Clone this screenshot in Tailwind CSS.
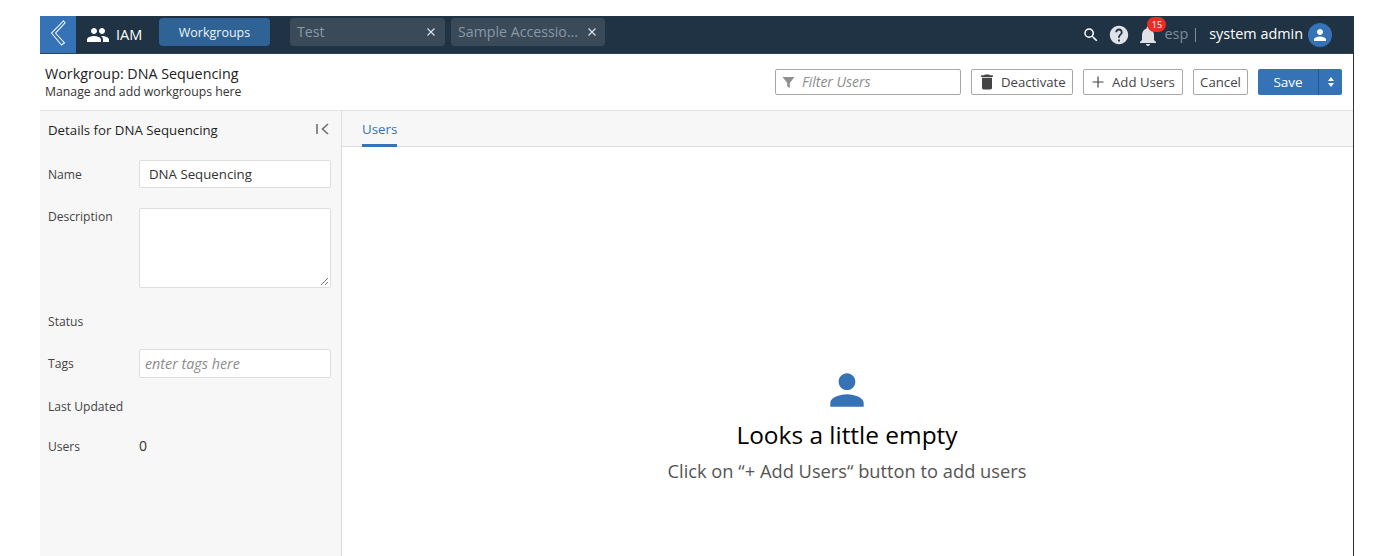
<!DOCTYPE html>
<html>
<head>
<meta charset="utf-8">
<script src="https://cdn.jsdelivr.net/npm/@tailwindcss/browser@4"></script>
</head>
<body class="bg-white overflow-hidden font-['Open_Sans',sans-serif]">
<div class="w-[1384px] h-[556px] pl-[40px] pt-[16px] overflow-hidden">
  <div class="w-[1314px] h-[540px] flex flex-col border-r border-r-[#333333]">
    <header class="h-[38px] shrink-0 bg-[#203345] border-b border-[#2c4257] flex items-center text-white">
      <div class="w-[36px] h-[37px] bg-[#3572b6] flex items-start justify-center pt-[4px] shrink-0">
        <svg width="16" height="26" viewBox="0 0 16 26" fill="none" stroke="#e8f0f8" stroke-width="1.1"><path d="M13.5 0.8 L1.5 13 L11.5 25 L14.5 22.8 L5.5 13 L15 3 Z"/></svg>
      </div>
      <svg class="ml-[10px] shrink-0" width="24" height="24" viewBox="0 0 24 24" fill="#ffffff"><path d="M16 11c1.66 0 2.99-1.34 2.99-3S17.66 5 16 5s-3 1.34-3 3 1.34 3 3 3zm-8 0c1.66 0 2.99-1.34 2.99-3S9.66 5 8 5 5 6.34 5 8s1.34 3 3 3zm0 2c-2.33 0-7 1.17-7 3.5V19h14v-2.5c0-2.33-4.67-3.5-7-3.5zm8 0c-.29 0-.62.02-.97.05 1.16.84 1.97 1.97 1.97 3.45V19h6v-2.5c0-2.33-4.67-3.5-7-3.5z"/></svg>
      <span class="ml-[6px] text-[14.5px] font-medium w-[27px]">IAM</span>
      <div class="self-start mt-[2px] ml-[16px] w-[111px] h-[28px] pt-[2px] rounded-[4px] bg-[#2f6295] flex items-center justify-center text-[12.5px] font-medium text-[#f0f4f8]">Workgroups</div>
      <div class="self-start mt-[2px] ml-[20px] w-[155px] h-[28px] rounded-[4px] bg-[#3a4a59] flex items-center justify-between pl-[7px] pr-[9px] text-[14.2px] text-[#8b98a5]">
        <span>Test</span>
        <svg width="10" height="10" viewBox="0 0 10 10" stroke="#dfe4e9" stroke-width="1.1"><path d="M1.5 1.5l7 7M8.5 1.5l-7 7"/></svg>
      </div>
      <div class="self-start mt-[2px] ml-[6px] w-[154px] h-[28px] rounded-[4px] bg-[#3a4a59] flex items-center justify-between pl-[7px] pr-[8px] text-[14.2px] text-[#8b98a5]">
        <span class="whitespace-nowrap">Sample Accessio...</span>
        <svg width="10" height="10" viewBox="0 0 10 10" stroke="#dfe4e9" stroke-width="1.1"><path d="M1.5 1.5l7 7M8.5 1.5l-7 7"/></svg>
      </div>
      <div class="ml-auto flex items-center pr-[21px]">
        <svg width="18" height="18" viewBox="0 0 24 24" fill="#ffffff"><path d="M15.5 14h-.79l-.28-.27A6.47 6.47 0 0 0 16 9.5 6.5 6.5 0 1 0 9.5 16c1.61 0 3.09-.59 4.23-1.57l.27.28v.79l5 4.99L20.49 19l-4.99-5zm-6 0C7.01 14 5 11.99 5 9.5S7.01 5 9.5 5 14 7.01 14 9.5 11.99 14 9.5 14z"/></svg>
        <svg class="ml-[8px]" width="22" height="22" viewBox="0 0 24 24" fill="#dfe3e7"><path d="M12 2C6.48 2 2 6.48 2 12s4.48 10 10 10 10-4.48 10-10S17.52 2 12 2zm1 17h-2v-2h2v2zm2.07-7.75l-.9.92C13.45 12.9 13 13.5 13 15h-2v-.5c0-1.1.45-2.1 1.17-2.83l1.24-1.26c.37-.36.59-.86.59-1.41 0-1.1-.9-2-2-2s-2 .9-2 2H8c0-2.21 1.79-4 4-4s4 1.79 4 4c0 .88-.36 1.68-.93 2.25z"/></svg>
        <div class="relative ml-[8px] w-[20px] h-[24px] mt-[2px]">
          <svg class="absolute left-[-2px] top-0" width="24" height="24" viewBox="0 0 24 24" fill="#dfe3e7"><path d="M12 22c1.1 0 2-.9 2-2h-4c0 1.1.9 2 2 2zm6-6v-5c0-3.07-1.63-5.64-4.5-6.32V4c0-.83-.67-1.5-1.5-1.5s-1.5.67-1.5 1.5v.68C7.64 5.36 6 7.92 6 11v5l-2 2v1h16v-1l-2-2z"/></svg>
          <span class="absolute left-[9px] top-[-7px] w-[19px] h-[15px] rounded-full bg-[#e62e25] text-white text-[9px] leading-[15px] text-center">15</span>
        </div>
        <span class="ml-[6px] pb-[1px] text-[14.4px] text-[#7f8c99]">esp</span>
        <span class="ml-[7px] w-px h-[14px] bg-[#7f8c99]"></span>
        <span class="ml-[13px] pb-[1px] text-[14.4px] text-white whitespace-nowrap">system admin</span>
        <span class="ml-[5px] w-[24px] h-[24px] rounded-full bg-[#3572b6] flex items-center justify-center">
          <svg width="18" height="18" viewBox="0 0 24 24" fill="#ffffff"><path d="M12 12c2.21 0 4-1.79 4-4s-1.79-4-4-4-4 1.79-4 4 1.79 4 4 4zm0 2c-2.67 0-8 1.34-8 4v2h16v-2c0-2.66-5.33-4-8-4z"/></svg>
        </span>
      </div>
    </header>

    <div class="h-[57px] shrink-0 bg-white border-b border-[#e2e2e2] flex items-center pl-[5px] pr-[11px]">
      <div>
        <div class="text-[14.3px] leading-[19px] text-[#222222]">Workgroup: DNA Sequencing</div>
        <div class="text-[12.25px] leading-[17px] text-[#333333]">Manage and add workgroups here</div>
      </div>
      <div class="ml-auto flex items-center text-[13.2px] text-[#444444]">
        <div class="w-[186px] h-[26px] border border-[#a8a8a8] rounded-[2px] flex items-center pl-[6px]">
          <svg width="13" height="13" viewBox="0 0 12 12" fill="#8f8f8f"><path d="M0.5 1h11L7.2 6.4V11L4.8 9.8V6.4z"/></svg>
          <span class="ml-[7px] pb-[2px] text-[14px] italic text-[#8c8c8c]">Filter Users</span>
        </div>
        <div class="ml-[10px] w-[102px] h-[26px] border border-[#a8a8a8] rounded-[2px] flex items-center pl-[5px]">
          <svg width="20" height="20" viewBox="0 0 24 24" fill="#444444"><path d="M6 19c0 1.1.9 2 2 2h8c1.1 0 2-.9 2-2V7H6v12zM19 4h-3.5l-1-1h-5l-1 1H5v2h14V4z"/></svg>
          <span class="ml-[4px] pt-[1px] whitespace-nowrap">Deactivate</span>
        </div>
        <div class="ml-[10px] w-[100px] h-[26px] border border-[#a8a8a8] rounded-[2px] flex items-center pl-[7px]">
          <svg width="14" height="14" viewBox="0 0 14 14" stroke="#444444" stroke-width="1.2"><path d="M7 1.5v11M1.5 7h11"/></svg>
          <span class="ml-[7px] pt-[1px] whitespace-nowrap">Add Users</span>
        </div>
        <div class="ml-[10px] w-[55px] h-[26px] pt-[1px] border border-[#a8a8a8] rounded-[2px] flex items-center justify-center">Cancel</div>
        <div class="ml-[10px] w-[84px] h-[26px] rounded-[2px] bg-[#3572b6] flex items-center text-white">
          <span class="w-[60px] text-center font-medium text-[13.5px]">Save</span>
          <span class="w-px h-full bg-[#27588f]"></span>
          <span class="flex-1 flex justify-center">
            <svg width="8" height="12" viewBox="0 0 8 12" fill="#ffffff"><path d="M4 1l3 4H1zM4 11L1 7h6z"/></svg>
          </span>
        </div>
      </div>
    </div>

    <div class="flex-1 flex min-h-0">
      <aside class="w-[302px] shrink-0 bg-[#f7f7f7] border-r border-[#dcdcdc] pl-[8px] pr-[10px] text-[12.1px] text-[#444444]">
        <div class="h-[39px] flex items-center justify-between pr-[2px]">
          <span class="text-[13.25px] text-[#1f1f1f]">Details for DNA Sequencing</span>
          <svg class="mb-[3px]" width="13" height="12" viewBox="0 0 13 12" fill="none" stroke="#6f6f6f" stroke-width="1.6"><path d="M1 1v10M12 1L6.5 6l5.5 5"/></svg>
        </div>
        <div class="mt-[10px] flex items-center h-[28px]">
          <span class="w-[91px] pt-[2px]">Name</span>
          <div class="w-[192px] h-[28px] bg-white border border-[#dedede] rounded-[2px] pl-[9px] text-[13.25px] leading-[26px] text-[#333333]">DNA Sequencing</div>
        </div>
        <div class="mt-[20px] flex items-start h-[80px]">
          <span class="w-[91px]">Description</span>
          <div class="relative w-[192px] h-[80px] bg-white border border-[#dedede] rounded-[2px]">
            <svg class="absolute right-[1px] bottom-[1px]" width="9" height="9" viewBox="0 0 9 9" stroke="#777777" stroke-width="1"><path d="M1 8l7-7M5 8l3-3"/></svg>
          </div>
        </div>
        <div class="mt-[25px] h-[17px] leading-[17px]">Status</div>
        <div class="mt-[19px] flex items-center h-[29px]">
          <span class="w-[91px] pt-[2px]">Tags</span>
          <div class="w-[192px] h-[29px] bg-white border border-[#dedede] rounded-[2px] pl-[5px] text-[14.3px] leading-[27px] italic text-[#8c8c8c]">enter tags here</div>
        </div>
        <div class="mt-[21px] h-[16px] leading-[16px]">Last Updated</div>
        <div class="mt-[23px] flex items-start h-[16px]">
          <span class="w-[91px]">Users</span>
          <span class="text-[14px] leading-[16px] text-[#333333]">0</span>
        </div>
      </aside>
      <main class="flex-1 flex flex-col min-w-0">
        <div class="h-[36px] shrink-0 bg-[#f7f7f7] border-b border-[#dcdcdc] pl-[20px]">
          <div class="inline-block h-[36px] border-b-[3px] border-[#3572b6] text-[13.3px] leading-[36px] text-[#3572b6]">Users</div>
        </div>
        <div class="flex-1 flex flex-col items-center pt-[218px] pr-[1px]">
          <svg width="50" height="50" viewBox="0 0 24 24" fill="#3572b6"><path d="M12 12c2.21 0 4-1.79 4-4s-1.79-4-4-4-4 1.79-4 4 1.79 4 4 4zm0 2c-2.67 0-8 1.34-8 4v2h16v-2c0-2.66-5.33-4-8-4z"/></svg>
          <div class="mt-[4px] text-[24.45px] leading-[32px] text-black whitespace-nowrap">Looks a little empty</div>
          <div class="mt-[8px] text-[18.3px] leading-[24px] text-[#555555] whitespace-nowrap">Click on “+ Add Users“ button to add users</div>
        </div>
      </main>
    </div>
  </div>
</div>
</body>
</html>
